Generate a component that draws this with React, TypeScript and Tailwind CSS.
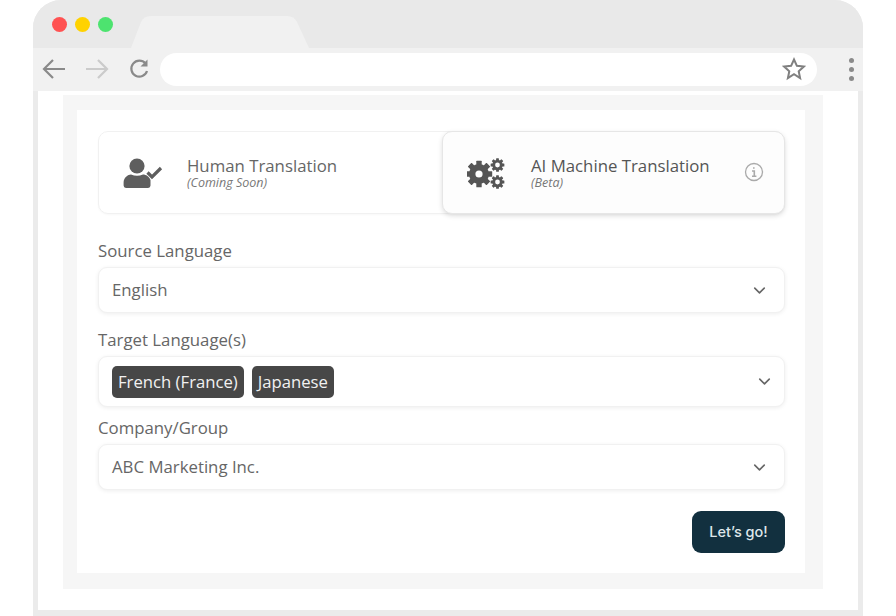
import React from "react";
import { ChevronDown } from "lucide-react";

function Gears() {
  const gear = (cx: number, cy: number, r: number, hole: number, teeth: number) => {
    const t = [];
    for (let i = 0; i < teeth; i++) {
      const a = (360 / teeth) * i;
      t.push(<rect key={i} x={cx - r * 0.27} y={cy - r * 1.32} width={r * 0.54} height={r * 0.6} rx={0.5} transform={`rotate(${a} ${cx} ${cy})`} fill="#555" />);
    }
    return (
      <g>
        {t}
        <circle cx={cx} cy={cy} r={(r + hole) / 2} fill="none" stroke="#555" strokeWidth={r - hole} />
      </g>
    );
  };
  return (
    <svg width="38" height="32" viewBox="0 0 38 32">
      {gear(12, 17, 10, 3.600, 8)}
      {gear(30.500, 8, 5.200, 2.400, 8)}
      {gear(30.500, 25, 5.200, 2.400, 8)}
    </svg>
  );
}

function UserCheck() {
  return (
    <svg width="40" height="32" viewBox="0 0 40 32" fill="#5e5e5e">
      <circle cx="14" cy="9" r="7.600" />
      <path d="M3 31a2.400 2.400 0 0 1-2.400-2.400v-3C.6 20.500 5 17.500 8 17.500c2 .8 4 1.300 6 1.300s4-.5 6-1.300c3 0 6.300 2.200 7.500 5.500V28.600a2.400 2.400 0 0 1-2.400 2.400z" />
      <path d="M24.500 15.500l4.500 4.500 9-9" fill="none" stroke="#5e5e5e" strokeWidth="3.200" />
    </svg>
  );
}

function Select({ h, pr, children }: { h: string; pr: string; children: React.ReactNode }) {
  return (
    <div className={`flex items-center justify-between rounded-[9px] bg-white border border-[#f1f1f1] shadow-[0_1px_4px_rgba(0,0,0,0.07)] ${h} ${pr}`}>
      {children}
      <ChevronDown size={19} strokeWidth={2} className="text-[#666]" />
    </div>
  );
}

export default function App() {
  return (
    <div className="w-[896px] h-[616px] bg-white overflow-hidden pl-[33px] font-['Open_Sans',sans-serif]">
      <div className="w-[830px] h-[616px] flex flex-col rounded-t-[28px] overflow-hidden bg-[#ebebeb]">
        <div className="h-[48px] shrink-0 bg-[#e9e9e9] flex pl-[19px] pt-[17px]">
          <div className="flex gap-[8px] h-[16px]">
            <span className="w-[15px] h-[15px] rounded-full bg-[#ff5252]" />
            <span className="w-[15px] h-[15px] rounded-full bg-[#ffd200]" />
            <span className="w-[15px] h-[15px] rounded-full bg-[#4de36f]" />
          </div>
          <svg width="180" height="32" viewBox="0 0 180 32" className="ml-[18px] -mt-[1px]" fill="#f1f1f1">
            <path d="M0 32 L10 6 Q12.500 0 20 0 H156 Q163 0 166 6 L178 32 Z" />
          </svg>
        </div>
        <div className="h-[43px] shrink-0 bg-[#f1f1f1] flex items-center pl-[8px] pr-[5px] pb-[1px]">
          <svg width="26" height="22" viewBox="0 0 26 22" fill="none" stroke="#8a8a8a" strokeWidth="2.200">
            <path d="M24 11H3M12 2l-9 9 9 9" />
          </svg>
          <svg width="26" height="22" viewBox="0 0 26 22" fill="none" stroke="#cbcbcb" strokeWidth="2.200" className="ml-[17px]">
            <path d="M2 11h21M14 2l9 9-9 9" />
          </svg>
          <svg width="20" height="22" viewBox="0 0 20 22" fill="none" stroke="#8a8a8a" strokeWidth="2.200" className="ml-[19px]">
            <path d="M16.500 5.500A8 8 0 1 0 18 13" />
            <path d="M18.500 1.500v7h-7" fill="#8a8a8a" stroke="none" />
          </svg>
          <div className="ml-[11px] w-[657px] h-[33px] bg-white rounded-full flex items-center justify-end pr-[11px]">
            <svg width="24" height="24" viewBox="0 0 24 24" fill="none" stroke="#808080" strokeWidth="2">
              <path d="M12 2.500l2.900 6.300 6.900.8-5.100 4.700 1.400 6.800L12 17.200l-6.100 3.900 1.400-6.800-5.100-4.700 6.900-.8z" />
            </svg>
          </div>
          <div className="ml-[32px] flex flex-col gap-[4px]">
            <span className="w-[5px] h-[5px] rounded-full bg-[#8a8a8a]" />
            <span className="w-[5px] h-[5px] rounded-full bg-[#8a8a8a]" />
            <span className="w-[5px] h-[5px] rounded-full bg-[#8a8a8a]" />
          </div>
        </div>
        <div className="mx-[5px] h-[519px] shrink-0 bg-white pl-[25px] pr-[35px] pt-[4px]">
          <div className="h-[494px] bg-[#f6f6f6] pl-[14px] pr-[18px] pt-[15px] pb-[16px]">
            <div className="h-full bg-white pl-[21px] pr-[20px] pt-[21px]">
              <div className="h-[83px] flex rounded-[10px] border border-[#f1f1f1] bg-white shadow-[0_1px_2px_rgba(0,0,0,0.03)]">
                <div className="w-[343px] flex items-center pl-[24px]">
                  <UserCheck />
                  <div className="ml-[24px]">
                    <div className="text-[16.800px] leading-[21px] text-[#666]">Human Translation</div>
                    <div className="text-[12.500px] leading-[14px] italic text-[#777]">(Coming Soon)</div>
                  </div>
                </div>
                <div className="flex-1 -my-[1px] -mr-[1px] flex items-center pl-[24px] pr-[20px] rounded-[10px] border border-[#e6e6e6] bg-[#fdfdfd] shadow-[0_2px_5px_rgba(0,0,0,0.13)]">
                  <Gears />
                  <div className="ml-[26px] flex-1">
                    <div className="text-[16.800px] leading-[21px] font-medium text-[#555]">AI Machine Translation</div>
                    <div className="text-[12.500px] leading-[14px] italic text-[#777]">(Beta)</div>
                  </div>
                  <svg width="20" height="20" viewBox="0 0 20 20" fill="none" stroke="#aaa" strokeWidth="1.300" className="-mt-[2px]">
                    <circle cx="10" cy="10" r="8.500" />
                    <path d="M8 9h2.300v5M8 14.300h4.400M9 6h1.600" strokeWidth="1.600" />
                  </svg>
                </div>
              </div>
              <div className="mt-[26px] text-[16.800px] leading-[22px] text-[#666]">Source Language</div>
              <div className="mt-[5px]">
                <Select h="h-[46px]" pr="pl-[13px] pr-[15px]">
                  <span className="text-[16.800px] text-[#666]">English</span>
                </Select>
              </div>
              <div className="mt-[16px] text-[16.800px] leading-[22px] text-[#666]">Target Language(s)</div>
              <div className="mt-[5px]">
                <Select h="h-[51px]" pr="pl-[13px] pr-[10px]">
                  <div className="flex gap-[8px]">
                    <span className="h-[32px] flex items-center px-[6px] rounded-[5px] bg-[#474747] text-[16.700px] text-[#f1f1f1]">French (France)</span>
                    <span className="h-[32px] flex items-center px-[6px] rounded-[5px] bg-[#474747] text-[16.700px] text-[#f1f1f1]">Japanese</span>
                  </div>
                </Select>
              </div>
              <div className="mt-[10px] text-[16.800px] leading-[22px] text-[#666]">Company/Group</div>
              <div className="mt-[5px]">
                <Select h="h-[46px]" pr="pl-[13px] pr-[15px]">
                  <span className="text-[16.800px] text-[#666]">ABC Marketing Inc.</span>
                </Select>
              </div>
              <div className="mt-[21px] flex justify-end">
                <button className="w-[93px] h-[42px] rounded-[9px] bg-[#12303f] text-[14.500px] font-medium font-['Inter',sans-serif] text-[#dfe7ea]">Let’s go!</button>
              </div>
            </div>
          </div>
        </div>
      </div>
    </div>
  );
}
